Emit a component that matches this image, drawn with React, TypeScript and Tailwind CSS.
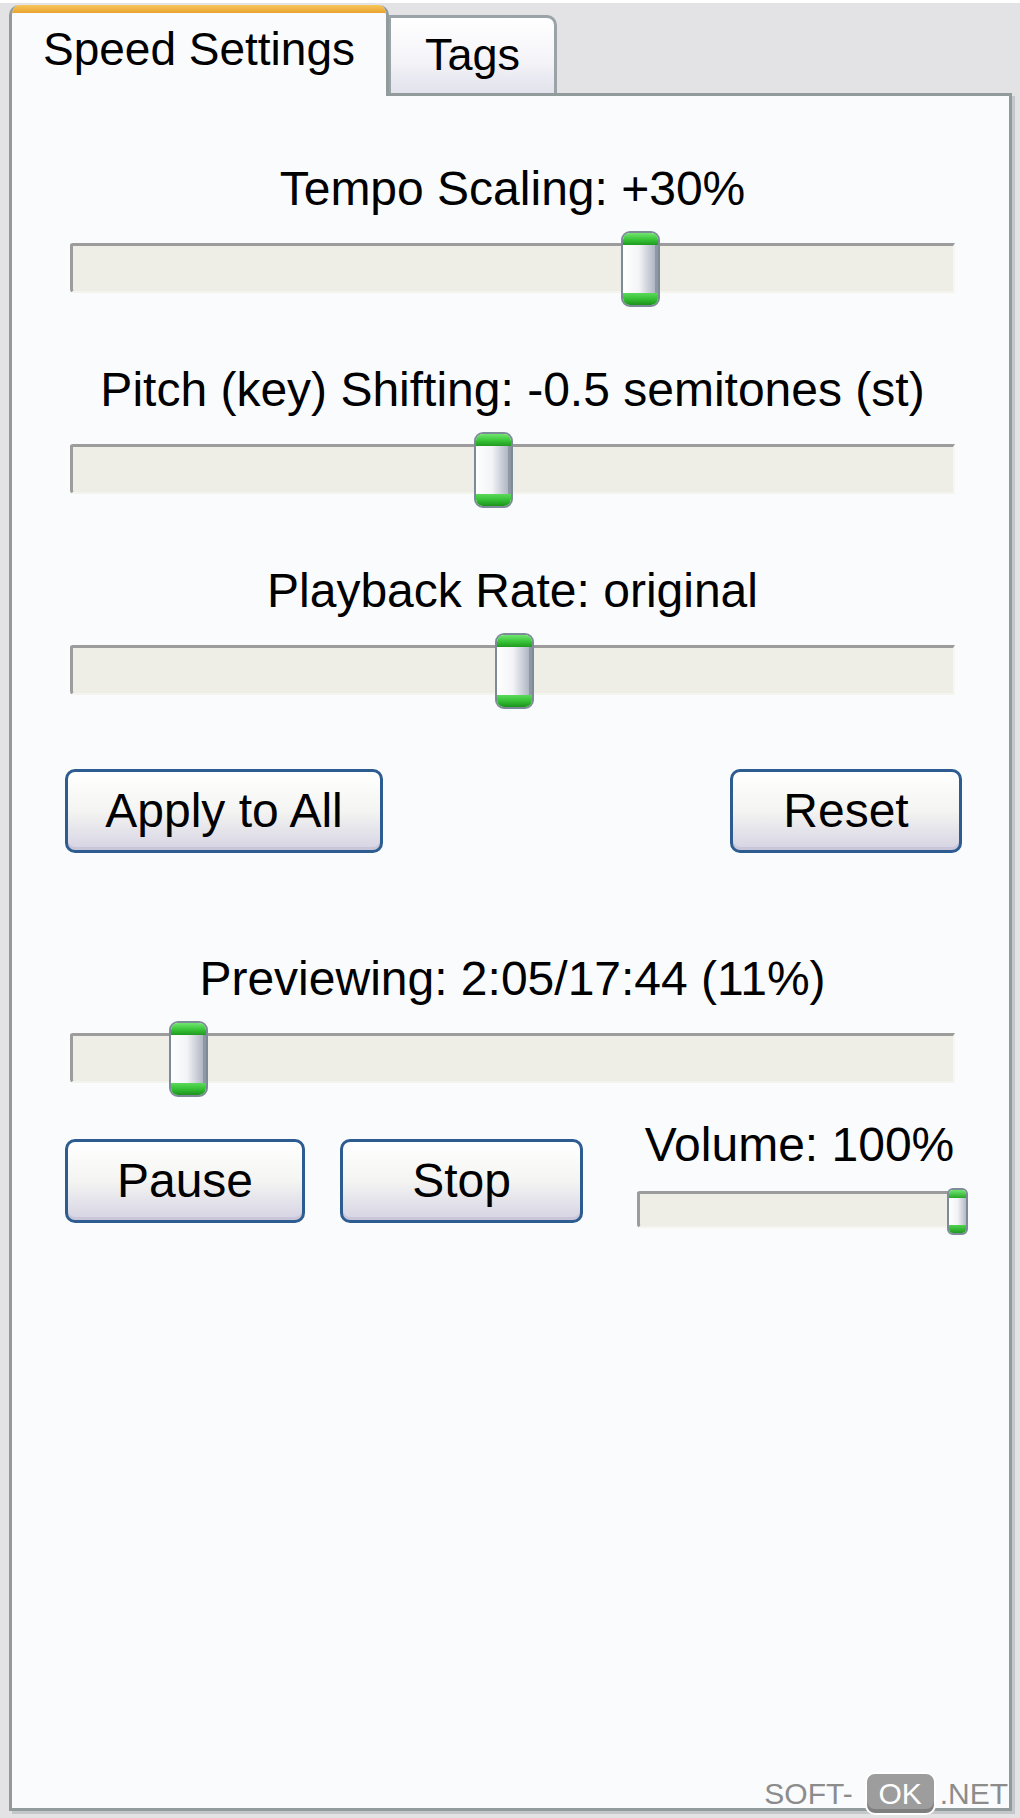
import React from "react";

function Thumb({ left, small }: { left: number; small?: boolean }) {
  if (small) {
    return (
      <div
        className="absolute top-[-3px] w-[21px] h-[47px] rounded-[6px] border-[2px] border-[#7d8b98] overflow-hidden flex flex-col bg-white"
        style={{ left }}
      >
        <div className="h-[8px] bg-gradient-to-b from-[#6fe56f] to-[#22a822]" />
        <div className="flex-1 bg-gradient-to-r from-white via-[#f2f3f6] to-[#b3b9c6]" />
        <div className="h-[8px] bg-gradient-to-b from-[#4fd44f] to-[#1f9a1f]" />
      </div>
    );
  }
  return (
    <div
      className="absolute top-[-12px] w-[39px] h-[76px] rounded-[9px] border-[2px] border-[#7d8b98] overflow-hidden flex flex-col bg-white"
      style={{ left }}
    >
      <div className="h-[12px] bg-gradient-to-b from-[#6fe56f] via-[#3cc83c] to-[#1f9a1f]" />
      <div className="flex-1 bg-gradient-to-r from-white via-[#f3f4f7] to-[#b0b6c3] border-r-[3px] border-[#8e97a4]" />
      <div className="h-[12px] bg-gradient-to-b from-[#5ad95a] via-[#35c035] to-[#1c921c]" />
    </div>
  );
}

function Track({ thumb, className = "" }: { thumb: number; className?: string }) {
  return (
    <div className={"relative h-[50px] " + className}>
      <div className="h-full bg-[#efeee6] border-t-[3px] border-l-[3px] border-[#9c9c9c] border-b-[2px] border-b-[#f4f4ef] border-r-[2px] border-r-[#f6f6f2] rounded-tl-[3px] rounded-bl-[4px]" />
      <Thumb left={thumb} />
    </div>
  );
}

function XpButton({ label, w }: { label: string; w: string }) {
  return (
    <div
      className={
        "h-[84px] rounded-[10px] border-[3px] border-[#2d5d90] bg-gradient-to-b from-white via-[#f4f4f2] to-[#d6d3e3] flex items-center justify-center text-[48px] leading-none text-black shadow-[inset_0_-3px_0_#c9c6d9,inset_0_3px_0_#ffffff] " +
        w
      }
    >
      {label}
    </div>
  );
}

function SliderGroup({ label, thumb, mt }: { label: string; thumb: number; mt: string }) {
  return (
    <div className={"ml-[58px] w-[885px] " + mt}>
      <div className="text-center text-[48px] leading-[54px] text-black whitespace-nowrap">{label}</div>
      <Track thumb={thumb} className="mt-[27px]" />
    </div>
  );
}

export default function App() {
  return (
    <div className="relative w-[1020px] h-[1818px] overflow-hidden bg-[#e3e3e6] border-t-[3px] border-white flex flex-col pl-[9px] pr-[8px] pb-[7px] font-['Liberation_Sans',Arial,sans-serif]">
      {/* Tab strip */}
      <div className="h-[90px] flex items-end shrink-0">
        <div className="relative z-10 mb-[-3px] w-[380px] h-[91px] bg-[#fafbfc] border-l-[3px] border-r-[3px] border-[#919b9c] rounded-t-[10px] overflow-hidden flex flex-col">
          <div className="h-[8px] bg-gradient-to-b from-[#f7c65a] to-[#e9a32c] -mx-[3px]" />
          <div className="flex-1 text-center text-[46px] leading-[54px] pt-[9px] text-black">Speed Settings</div>
        </div>
        <div className="w-[168px] h-[78px] border-t-[3px] border-r-[3px] border-l-[2px] border-[#9aa4a8] rounded-tr-[10px] bg-gradient-to-b from-white via-[#f6f6fa] to-[#e2e2ec] text-center text-[45px] leading-[54px] pt-[10px] text-black">
          Tags
        </div>
      </div>

      {/* Panel */}
      <div className="flex-1 border-[3px] border-[#919b9c] bg-[#fafbfc] shadow-[3px_3px_0_#c4c8ca] flex flex-col">
        <SliderGroup label="Tempo Scaling: +30%" thumb={551} mt="mt-[66px]" />
        <SliderGroup label="Pitch (key) Shifting: -0.5 semitones (st)" thumb={404} mt="mt-[70px]" />
        <SliderGroup label="Playback Rate: original" thumb={425} mt="mt-[70px]" />

        <div className="ml-[53px] w-[897px] mt-[74px] flex justify-between">
          <XpButton label="Apply to All" w="w-[318px]" />
          <XpButton label="Reset" w="w-[232px]" />
        </div>

        <SliderGroup label="Previewing: 2:05/17:44 (11%)" thumb={99} mt="mt-[99px]" />

        <div className="ml-[53px] mt-[35px] flex items-start">
          <div className="mt-[21px] flex gap-[35px]">
            <XpButton label="Pause" w="w-[240px]" />
            <XpButton label="Stop" w="w-[243px]" />
          </div>
          <div className="ml-[54px] w-[331px]">
            <div className="text-center text-[48px] leading-[54px] text-black pr-[6px] whitespace-nowrap">Volume: 100%</div>
            <div className="relative h-[37px] mt-[19px] w-[320px]">
              <div className="h-full bg-[#efeee6] border-t-[3px] border-l-[3px] border-[#9c9c9c] border-b-[2px] border-b-[#f4f4ef] rounded-tl-[3px] rounded-bl-[4px]" />
              <Thumb left={310} small />
            </div>
          </div>
        </div>
      </div>

      {/* Watermark */}
      <div className="absolute right-[12px] bottom-[3px] flex items-center h-[43px] text-[30px] leading-none text-[#8c8c8c]">
        <span>SOFT-</span>
        <span className="ml-[12px] h-[43px] w-[71px] rounded-[10px] bg-[#9d9d9d] border-[2px] border-white text-white flex items-center justify-center shadow-[inset_0_-4px_0_#7f7f7f]">
          OK
        </span>
        <span className="ml-[4px]">.NET</span>
      </div>
    </div>
  );
}
